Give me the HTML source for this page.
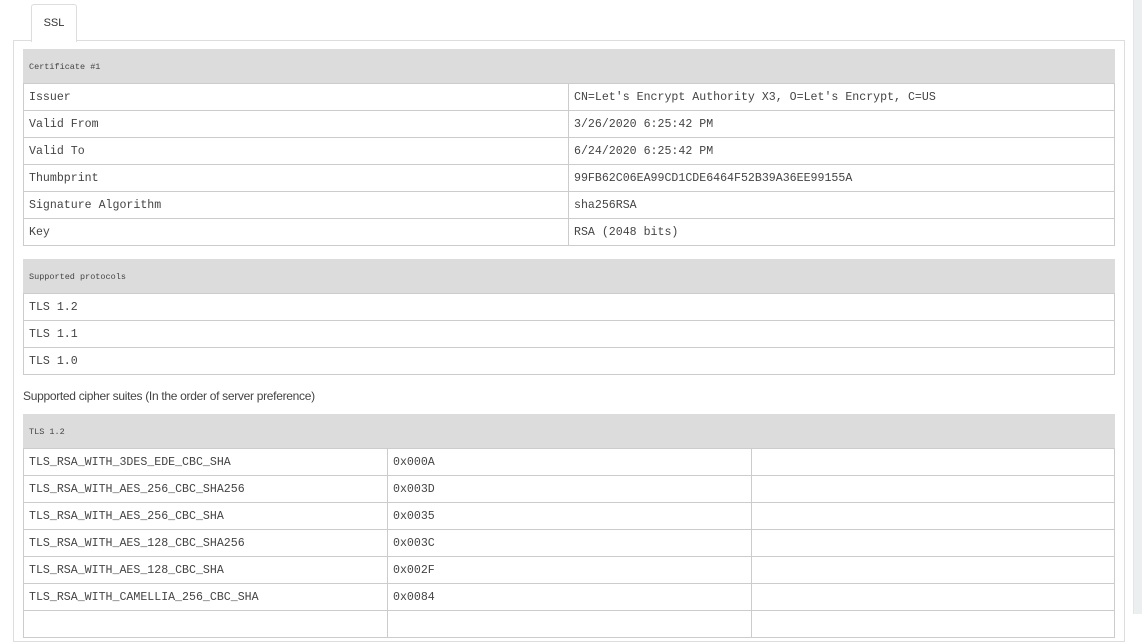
<!DOCTYPE html>
<html><head><style>
body{margin:0;width:1142px;height:614px;overflow:hidden;background:#fff;font-family:"Liberation Sans",sans-serif;position:relative}
.strip{position:absolute;left:1133px;top:0;width:9px;height:614px;background:#eceff0;border-left:1px solid #e3e6e8}
.tab{position:absolute;left:31px;top:4px;width:44px;height:37px;border:1px solid #ddd;border-bottom:none;border-radius:3px 3px 0 0;background:#fff;z-index:2;font-size:11px;color:#333;text-align:center;line-height:36px}
.panel{position:absolute;left:13px;top:40px;width:1110px;height:600px;border:1px solid #ddd}
table{position:absolute;left:23px;border-collapse:collapse;width:1092px;font-family:"Liberation Mono",monospace;font-size:11.6px;color:#444}
td{border:1px solid #ccc;height:27px;padding:0 0 0 5px;box-sizing:border-box}
th{background:#dcdcdc;height:33px;text-align:left;font-weight:normal;font-size:8.5px;padding:0 0 0 5px;border:1px solid #dcdcdc;border-bottom:1px solid #ccc;color:#444}
.txt{position:absolute;left:23px;top:389px;font-size:12px;color:#444;letter-spacing:-0.3px}
</style></head><body>
<div class="strip"></div>
<div class="panel"></div>
<div class="tab">SSL</div>
<table style="top:49px">
<tr><th colspan="2">Certificate #1</th></tr>
<tr><td style="width:545px">Issuer</td><td>CN=Let's Encrypt Authority X3, O=Let's Encrypt, C=US</td></tr>
<tr><td>Valid From</td><td>3/26/2020 6:25:42 PM</td></tr>
<tr><td>Valid To</td><td>6/24/2020 6:25:42 PM</td></tr>
<tr><td>Thumbprint</td><td>99FB62C06EA99CD1CDE6464F52B39A36EE99155A</td></tr>
<tr><td>Signature Algorithm</td><td>sha256RSA</td></tr>
<tr><td>Key</td><td>RSA (2048 bits)</td></tr>
</table>
<table style="top:259px">
<tr><th>Supported protocols</th></tr>
<tr><td>TLS 1.2</td></tr>
<tr><td>TLS 1.1</td></tr>
<tr><td>TLS 1.0</td></tr>
</table>
<div class="txt">Supported cipher suites (In the order of server preference)</div>
<table style="top:414px">
<tr><th colspan="3">TLS 1.2</th></tr>
<tr><td style="width:364px">TLS_RSA_WITH_3DES_EDE_CBC_SHA</td><td style="width:364px">0x000A</td><td></td></tr>
<tr><td>TLS_RSA_WITH_AES_256_CBC_SHA256</td><td>0x003D</td><td></td></tr>
<tr><td>TLS_RSA_WITH_AES_256_CBC_SHA</td><td>0x0035</td><td></td></tr>
<tr><td>TLS_RSA_WITH_AES_128_CBC_SHA256</td><td>0x003C</td><td></td></tr>
<tr><td>TLS_RSA_WITH_AES_128_CBC_SHA</td><td>0x002F</td><td></td></tr>
<tr><td>TLS_RSA_WITH_CAMELLIA_256_CBC_SHA</td><td>0x0084</td><td></td></tr>
<tr><td>&nbsp;</td><td></td><td></td></tr>
</table>
</body></html>
